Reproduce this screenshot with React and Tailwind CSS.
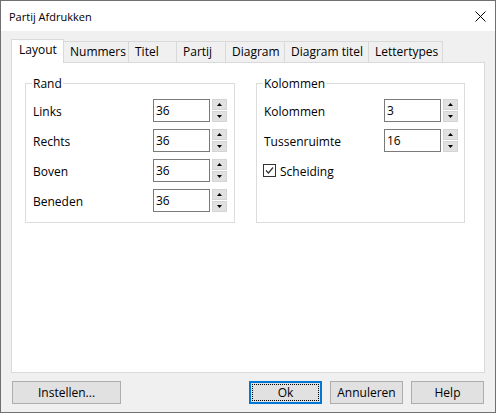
import React from "react";

function Spinner() {
  return (
    <div className="flex flex-col w-[15px] h-[23px] ml-[2px] gap-px">
      <div className="flex-1 bg-[#e1e1e1] border border-[#d4d4d4] flex items-center justify-center">
        <svg width="5" height="3" viewBox="0 0 5 3"><path d="M2.5 0 L5 3 L0 3 Z" fill="#000" /></svg>
      </div>
      <div className="flex-1 bg-[#e1e1e1] border border-[#d4d4d4] flex items-center justify-center">
        <svg width="5" height="3" viewBox="0 0 5 3"><path d="M0 0 L5 0 L2.5 3 Z" fill="#000" /></svg>
      </div>
    </div>
  );
}

function Row({ label, value }) {
  return (
    <div className="flex items-center h-[30px]">
      <span className="w-[120px] pt-[4px]">{label}</span>
      <input
        readOnly
        value={value}
        className="w-[57px] h-[23px] border border-[#7a7a7a] bg-white px-[2px] pt-[1px] outline-none text-[12px] leading-[16px]"
      />
      <Spinner />
    </div>
  );
}

const tabs = [
  { name: "Nummers", w: "w-[65px]" },
  { name: "Titel", w: "w-[48px]" },
  { name: "Partij", w: "w-[49px]" },
  { name: "Diagram", w: "w-[59px]" },
  { name: "Diagram titel", w: "w-[84px]" },
  { name: "Lettertypes", w: "w-[74px]" },
];

export default function App() {
  return (
    <div className="w-[496px] h-[413px] border border-[#707070] flex flex-col bg-[#f0f0f0] text-black text-[12px] leading-[16px] font-['Open_Sans',sans-serif]">
      <div className="h-[30px] bg-white flex items-center justify-between pl-[8px] pr-[9px] shrink-0">
        <span className="text-[11px] pt-[1px]">Partij Afdrukken</span>
        <svg width="11" height="11" viewBox="0 0 11 11">
          <path d="M0.5 0.5 L10.5 10.5 M10.5 0.5 L0.5 10.5" stroke="#000" strokeWidth="1" />
        </svg>
      </div>
      <div className="flex-1 flex flex-col pl-[10px] pr-[10px] pt-[8px]">
        <div className="flex items-end h-[23px]">
          <div className="w-[53px] h-[24px] -mb-px relative z-10 bg-white border-l border-t border-r border-[#d9d9d9] pl-[7px] pt-[2px]">
            Layout
          </div>
          {tabs.map((t) => (
            <div
              key={t.name}
              className={`${t.w} h-[21px] border-t border-r border-[#d9d9d9] pl-[6px] pt-[2px] whitespace-nowrap`}
            >
              {t.name}
            </div>
          ))}
        </div>
        <div className="w-[474px] h-[311px] border border-[#d9d9d9] bg-white flex pt-[12px] pl-[13px] gap-[21px]">
          <fieldset className="border border-[#dcdcdc] w-[210px] h-[148px] pl-[7px]">
            <legend className="-ml-[1px] px-[1px] leading-[16px] pt-[1px]">Rand</legend>
            <div className="pt-[3px]">
              <Row label="Links" value="36" />
              <Row label="Rechts" value="36" />
              <Row label="Boven" value="36" />
              <Row label="Beneden" value="36" />
            </div>
          </fieldset>
          <fieldset className="border border-[#dcdcdc] w-[209px] h-[148px] pl-[7px]">
            <legend className="-ml-[1px] px-[1px] leading-[16px] pt-[1px]">Kolommen</legend>
            <div className="pt-[3px]">
              <Row label="Kolommen" value="3" />
              <Row label="Tussenruimte" value="16" />
              <div className="flex items-center h-[30px] -ml-px">
                <span className="w-[13px] h-[13px] border border-[#333333] bg-white flex items-center justify-center">
                  <svg width="9" height="9" viewBox="0 0 9 9">
                    <path d="M1 4.5 L3.5 7 L8 1.5" stroke="#333333" strokeWidth="1.2" fill="none" />
                  </svg>
                </span>
                <span className="ml-[4px] pt-[3px]">Scheiding</span>
              </div>
            </div>
          </fieldset>
        </div>
        <div className="flex items-center mt-[8px] h-[23px]">
          <button className="ml-px w-[109px] h-[23px] border border-[#adadad] bg-[#e1e1e1] pt-[1px]">Instellen...</button>
          <div className="flex-1" />
          <button className="w-[73px] h-[23px] border-2 border-[#0078d7] bg-[#e1e1e1] pt-[1px] outline-1 outline-dotted outline-black outline-offset-[-4px]">
            Ok
          </button>
          <button className="ml-[8px] w-[73px] h-[23px] border border-[#adadad] bg-[#e1e1e1] pt-[1px]">Annuleren</button>
          <button className="ml-[8px] mr-px w-[73px] h-[23px] border border-[#adadad] bg-[#e1e1e1] pt-[1px]">Help</button>
        </div>
      </div>
    </div>
  );
}
